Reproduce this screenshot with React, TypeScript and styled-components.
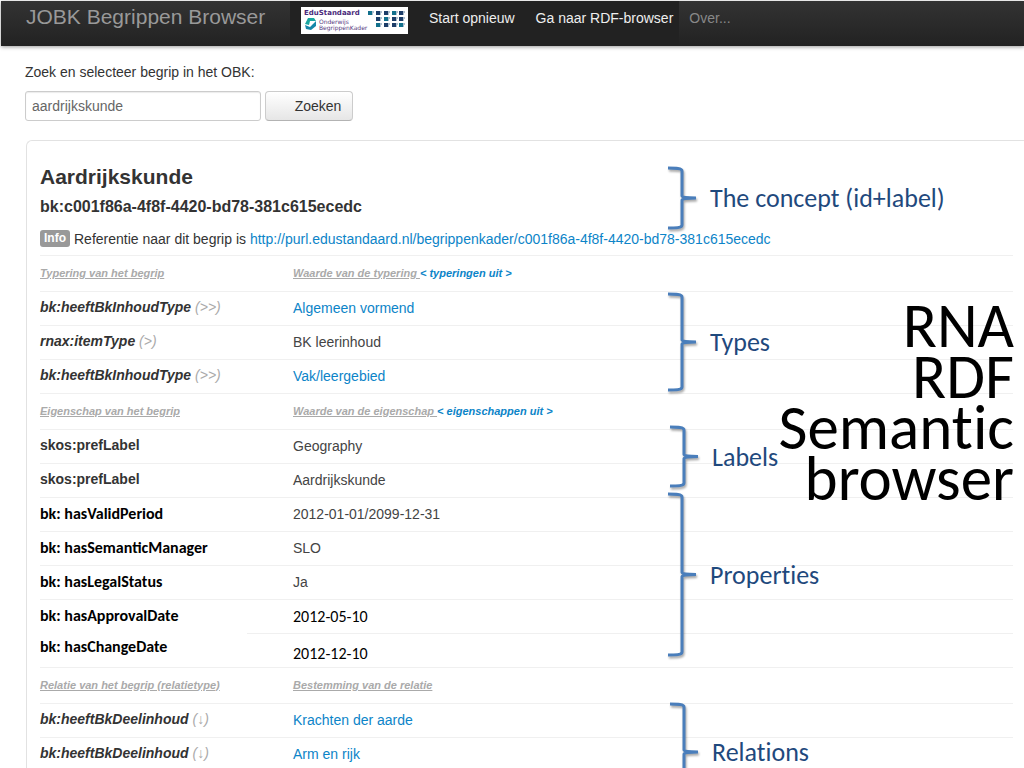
import React from "react";
import styled, { createGlobalStyle } from "styled-components";

const sans = `"Liberation Sans", Arial, sans-serif`;
const humanist = `Carlito, Calibri, "Open Sans", sans-serif`;

const GlobalStyle = createGlobalStyle`
  * { box-sizing: border-box; }
  body { margin: 0; background: #fff; color: #333; font: 14px/20px ${sans}; }
  a { color: #0c84c8; text-decoration: none; }
`;

const Page = styled.div`
  position: relative;
  display: flex;
  flex-direction: column;
  height: 100vh;
  overflow: hidden;
`;

const Navbar = styled.header`
  display: flex;
  flex: none;
  height: 45px;
  margin: 1px 0 0 1px;
  padding-left: 25px;
  background: linear-gradient(#333, #222);
  box-shadow: 0 1px 4px rgba(0, 0, 0, 0.4);
`;

const Brand = styled.a`
  width: 264px;
  font-size: 21px;
  line-height: 32px;
  white-space: nowrap;
  color: #999;
`;

const NavGroup = styled.nav`
  display: flex;
  gap: 21px;
  padding: 0 6px 0 11px;
  background: #222;
`;

const NavLink = styled.a<{ $muted?: boolean }>`
  line-height: 34px;
  white-space: nowrap;
  color: ${(p) => (p.$muted ? "#888" : "#eee")};
  ${(p) => p.$muted && "margin-left: 10px;"}
`;

const LogoBox = styled.svg`
  flex: none;
  margin-top: 6px;
  background: #fff;
`;

const SearchForm = styled.form`
  flex: none;
  padding: 16px 25px 0;
`;

const SearchLabel = styled.label`
  display: block;
  margin-bottom: 9px;
`;

const SearchRow = styled.div`
  display: flex;
  gap: 4px;
`;

const SearchInput = styled.input`
  width: 236px;
  height: 30px;
  padding: 0 6px;
  border: 1px solid #ccc;
  border-radius: 3px;
  box-shadow: inset 0 1px 1px rgba(0, 0, 0, 0.08);
  font: 14px ${sans};
  color: #666;
`;

const SearchButton = styled.button`
  width: 88px;
  height: 30px;
  padding: 0 0 0 18px;
  border: 1px solid #ccc;
  border-bottom-color: #b3b3b3;
  border-radius: 4px;
  background: linear-gradient(#fff, #e6e6e6);
  font: 14px ${sans};
  color: #333;
`;

const Panel = styled.main`
  flex: 1 0 auto;
  margin: 19px 0 0 26px;
  padding: 22px 11px 0 13px;
  border: 1px solid #e2e2e2;
  border-width: 1px 0 0 1px;
  border-radius: 6px 0 0 0;
`;

const ConceptTitle = styled.h1`
  margin: 0;
  font-size: 21px;
  line-height: 28px;
`;

const ConceptId = styled.h2`
  margin: 6px 0;
  font-size: 16px;
  line-height: 20px;
`;

const Reference = styled.p`
  display: flex;
  align-items: center;
  gap: 4px;
  margin: 0;
  height: 32px;
  padding-bottom: 1px;
  white-space: nowrap;
`;

const Badge = styled.span`
  padding: 0 4px;
  border-radius: 3px;
  background: #999;
  color: #fff;
  font-size: 12px;
  font-weight: bold;
  line-height: 17px;
`;

const Facts = styled.table`
  width: 100%;
  table-layout: fixed;
  border-collapse: separate;
  border-spacing: 0;
`;

const KeyCol = styled.col`
  width: 253px;
`;

const rule = "#f0f0f0";

const SectionHead = styled.th`
  height: 36px;
  padding: 0 0 2px;
  border-top: 1px solid ${rule};
  text-align: left;
  font-size: 11px;
  font-style: italic;
  color: #aaa;
  span { text-decoration: underline; white-space: pre; }
`;

type Look = "sans" | "italic" | "note";

const Key = styled.th<{ $look: Look; $raised?: boolean; $partRule?: boolean }>`
  height: 34px;
  padding: 0 0 ${(p) => (p.$raised ? 7 : p.$look === "note" ? 0 : 3)}px;
  background: linear-gradient(
      to right,
      transparent ${(p) => (p.$partRule ? 207 : 0)}px,
      ${rule} ${(p) => (p.$partRule ? 207 : 0)}px
    )
    top / 100% 1px no-repeat;
  text-align: left;
  font-family: ${(p) => (p.$look === "note" ? humanist : sans)};
  font-size: ${(p) => (p.$look === "note" ? 16 : 14)}px;
  font-style: ${(p) => (p.$look === "italic" ? "italic" : "normal")};
  color: ${(p) => (p.$look === "note" ? "#000" : "#333")};
  small { font-size: 14px; font-weight: normal; color: #aaa; }
`;

const Value = styled.td<{ $note?: boolean; $lowered?: boolean }>`
  padding: ${(p) => (p.$lowered ? 7 : 0)}px 0 ${(p) => (p.$note ? 0 : 1)}px;
  border-top: 1px solid ${rule};
  font-family: ${(p) => (p.$note ? humanist : sans)};
  font-size: ${(p) => (p.$note ? 16 : 14)}px;
  color: ${(p) => (p.$note ? "#000" : "#444")};
`;

const Annotation = styled.div<{ $top: number; $left: number }>`
  position: absolute;
  top: ${(p) => p.$top}px;
  left: ${(p) => p.$left}px;
  display: flex;
  align-items: center;
  gap: 12px;
  font: 26px/28px ${humanist};
  font-variant-ligatures: none;
  white-space: nowrap;
  color: #1f497d;
`;

const BraceDrawing = styled.svg`
  overflow: visible;
  filter: drop-shadow(1px 2px 1px rgba(0, 0, 0, 0.35));
`;

const SlideTitle = styled.div`
  position: absolute;
  top: 300px;
  right: 10px;
  font: 63px/51px ${humanist};
  font-variant-ligatures: none;
  text-align: right;
  color: #000;
`;

function Brace({ height }: { height: number }) {
  const mid = height / 2;
  const end = height - 1;
  return (
    <BraceDrawing width="30" height={height} aria-hidden="true">
      <path
        d={`M0 1 C8 1 14 1 14 4 V${mid - 2} Q14 ${mid} 28 ${mid} Q14 ${mid} 14 ${mid + 2} V${end - 3} C14 ${end} 8 ${end} 0 ${end}`}
        fill="none"
        stroke="#4a7ebb"
        strokeWidth="3"
      />
    </BraceDrawing>
  );
}

function Logo() {
  const tiles = [
    [67, 4], [75, 4], [83, 4], [91, 4], [98, 4],
    [75, 10], [83, 10], [91, 10], [98, 10],
    [75, 16], [83, 16], [91, 16], [98, 16],
  ];
  return (
    <LogoBox width="107" height="27" role="img" aria-label="EduStandaard Onderwijs Begrippenkader">
      <text x="3" y="8" fontFamily="DejaVu Sans" fontSize="7" fontWeight="bold" fill="#4b2a7b">EduStandaard</text>
      <path d="M4 17 L7 11 L13 11 L15 14 L9 14 L8 18 Z" fill="#1aa6a0" />
      <path d="M15 14 L15 19 L10 23 L5 22 L4 18 L9 20 L12 17 Z" fill="#1687a8" />
      <text x="18" y="17" fontFamily="DejaVu Sans" fontSize="6" fill="#553a80">Onderwijs</text>
      <text x="18" y="23" fontFamily="DejaVu Sans" fontSize="6" fill="#553a80">BegrippenKader</text>
      {tiles.map(([x, y], i) => (
        <g key={i}>
          <rect x={x} y={y} width="4" height="4" fill={i % 3 === 0 ? "#12708c" : "#1d3d68"} />
          <path d={`M${x + 4} ${y + 1} h2 M${x + 4} ${y + 3} h1`} stroke="#5d7f9c" />
        </g>
      ))}
    </LogoBox>
  );
}

type Fact = {
  name: string;
  mark?: string;
  value: string;
  link?: boolean;
  look: Look;
  noteValue?: boolean;
  spread?: boolean;
};

type Section = { left: string; right: string; toggle?: string; facts: Fact[] };

const sections: Section[] = [
  {
    left: "Typering van het begrip",
    right: "Waarde van de typering ",
    toggle: "< typeringen uit >",
    facts: [
      { name: "bk:heeftBkInhoudType", mark: "(>>)", value: "Algemeen vormend", link: true, look: "italic" },
      { name: "rnax:itemType", mark: "(>)", value: "BK leerinhoud", look: "italic" },
      { name: "bk:heeftBkInhoudType", mark: "(>>)", value: "Vak/leergebied", link: true, look: "italic" },
    ],
  },
  {
    left: "Eigenschap van het begrip",
    right: "Waarde van de eigenschap ",
    toggle: "< eigenschappen uit >",
    facts: [
      { name: "skos:prefLabel", value: "Geography", look: "sans" },
      { name: "skos:prefLabel", value: "Aardrijkskunde", look: "sans" },
      { name: "bk: hasValidPeriod", value: "2012-01-01/2099-12-31", look: "note" },
      { name: "bk: hasSemanticManager", value: "SLO", look: "note" },
      { name: "bk: hasLegalStatus", value: "Ja", look: "note" },
      { name: "bk: hasApprovalDate", value: "2012-05-10", look: "note", noteValue: true },
      { name: "bk: hasChangeDate", value: "2012-12-10", look: "note", noteValue: true, spread: true },
    ],
  },
  {
    left: "Relatie van het begrip (relatietype)",
    right: "Bestemming van de relatie",
    facts: [
      { name: "bk:heeftBkDeelinhoud", mark: "(↓)", value: "Krachten der aarde", link: true, look: "italic" },
      { name: "bk:heeftBkDeelinhoud", mark: "(↓)", value: "Arm en rijk", link: true, look: "italic" },
    ],
  },
];

const annotations = [
  { text: "The concept (id+label)", top: 167, left: 668, height: 62 },
  { text: "Types", top: 293, left: 668, height: 98 },
  { text: "Labels", top: 426, left: 670, height: 61 },
  { text: "Properties", top: 493, left: 668, height: 163 },
  { text: "Relations", top: 703, left: 670, height: 98 },
];

export default function App() {
  return (
    <Page>
      <GlobalStyle />
      <Navbar>
        <Brand href="#">JOBK Begrippen Browser</Brand>
        <NavGroup>
          <Logo />
          <NavLink href="#">Start opnieuw</NavLink>
          <NavLink href="#">Ga naar RDF-browser</NavLink>
        </NavGroup>
        <NavLink href="#" $muted>Over...</NavLink>
      </Navbar>
      <SearchForm onSubmit={(e) => e.preventDefault()}>
        <SearchLabel htmlFor="term">Zoek en selecteer begrip in het OBK:</SearchLabel>
        <SearchRow>
          <SearchInput id="term" type="text" defaultValue="aardrijkskunde" />
          <SearchButton type="submit">Zoeken</SearchButton>
        </SearchRow>
      </SearchForm>
      <Panel>
        <ConceptTitle>Aardrijkskunde</ConceptTitle>
        <ConceptId>bk:c001f86a-4f8f-4420-bd78-381c615ecedc</ConceptId>
        <Reference>
          <Badge>Info</Badge>
          <span>
            Referentie naar dit begrip is{" "}
            <a href="#">http://purl.edustandaard.nl/begrippenkader/c001f86a-4f8f-4420-bd78-381c615ecedc</a>
          </span>
        </Reference>
        <Facts>
          <colgroup>
            <KeyCol />
            <col />
          </colgroup>
          {sections.map((s) => (
            <tbody key={s.left}>
              <tr>
                <SectionHead><span>{s.left}</span></SectionHead>
                <SectionHead>
                  <span>{s.right}</span>
                  {s.toggle && <a href="#">{s.toggle}</a>}
                </SectionHead>
              </tr>
              {s.facts.map((f, i) => (
                <tr key={i}>
                  <Key $look={f.look} $raised={f.spread} $partRule={f.spread}>
                    {f.name} {f.mark && <small>{f.mark}</small>}
                  </Key>
                  <Value $note={f.noteValue} $lowered={f.spread}>
                    {f.link ? <a href="#">{f.value}</a> : f.value}
                  </Value>
                </tr>
              ))}
            </tbody>
          ))}
        </Facts>
      </Panel>
      {annotations.map((a) => (
        <Annotation key={a.text} $top={a.top} $left={a.left}>
          <Brace height={a.height} />
          <span>{a.text}</span>
        </Annotation>
      ))}
      <SlideTitle>
        RNA<br />RDF<br />Semantic<br />browser
      </SlideTitle>
    </Page>
  );
}
